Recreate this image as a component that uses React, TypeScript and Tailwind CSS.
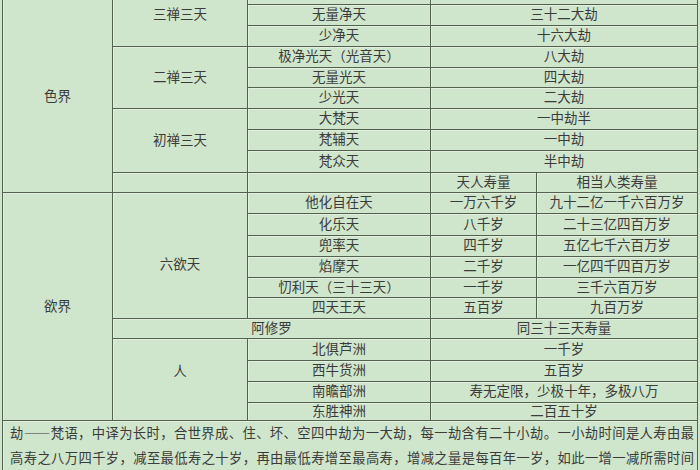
import type { ReactNode } from "react";

const cellBase =
  "flex items-center justify-center whitespace-nowrap border-r border-b border-[#53624f] shadow-[inset_1px_1px_0_#e2efde] leading-none";

function Cell({ className = "", children }: { className?: string; children?: ReactNode }) {
  return <div className={`${cellBase} ${className}`}>{children}</div>;
}

function FooterNote() {
  return (
    <div className="col-span-5 border-r border-[#53624f] pl-[7px] pr-[3px] shadow-[inset_1px_1px_0_#e2efde]">
      <div className="-mt-[1px] text-[13.3px] leading-[25px]">
        <div className="whitespace-nowrap text-justify [text-align-last:justify]">
          劫<span className="font-['Noto_Sans_CJK_SC',sans-serif] [font-feature-settings:'fwid']">——</span>梵语，中译为长时，合世界成、住、坏、空四中劫为一大劫，每一劫含有二十小劫。一小劫时间是人寿由最
        </div>
        <div className="whitespace-nowrap text-justify [text-align-last:justify]">
          高寿之八万四千岁，减至最低寿之十岁，再由最低寿增至最高寿，增减之量是每百年一岁，如此一增一减所需时间
        </div>
        <div className="whitespace-nowrap">为一小劫。</div>
      </div>
    </div>
  );
}

export default function App() {
  return (
    <div className="h-[470px] w-[700px] overflow-hidden bg-[#d0e6cc] font-['Liberation_Serif','Noto_Sans_CJK_SC',serif] text-[13.5px] text-[#3b3b3b]">
      <div className="ml-[2px] -mt-[17px] grid w-[696px] grid-cols-[110px_135px_183px_106px_161px] grid-rows-[21px_21px_21px_21px_20px_21px_21px_21px_22px_20px_21px_22px_21px_21px_20px_21px_20px_22px_21px_21px_18px_90px] border-l border-t border-[#53624f]">
        {/* 色界 — the first row sits above the visible area */}
        <Cell className="row-span-10 pt-[17px]">色界</Cell>
        <Cell className="row-span-3">三禅三天</Cell>
        <Cell />
        <Cell className="col-span-2" />
        <Cell>无量净天</Cell>
        <Cell className="col-span-2">三十二大劫</Cell>
        <Cell>少净天</Cell>
        <Cell className="col-span-2">十六大劫</Cell>

        <Cell className="row-span-3">二禅三天</Cell>
        <Cell>极净光天（光音天）</Cell>
        <Cell className="col-span-2">八大劫</Cell>
        <Cell>无量光天</Cell>
        <Cell className="col-span-2">四大劫</Cell>
        <Cell>少光天</Cell>
        <Cell className="col-span-2">二大劫</Cell>

        <Cell className="row-span-3">初禅三天</Cell>
        <Cell>大梵天</Cell>
        <Cell className="col-span-2">一中劫半</Cell>
        <Cell>梵辅天</Cell>
        <Cell className="col-span-2">一中劫</Cell>
        <Cell>梵众天</Cell>
        <Cell className="col-span-2">半中劫</Cell>

        <Cell />
        <Cell />
        <Cell>天人寿量</Cell>
        <Cell>相当人类寿量</Cell>

        {/* 欲界 */}
        <Cell className="row-span-11">欲界</Cell>
        <Cell className="row-span-6 pt-[18px]">六欲天</Cell>
        <Cell>他化自在天</Cell>
        <Cell>一万六千岁</Cell>
        <Cell>九十二亿一千六百万岁</Cell>
        <Cell>化乐天</Cell>
        <Cell>八千岁</Cell>
        <Cell>二十三亿四百万岁</Cell>
        <Cell>兜率天</Cell>
        <Cell>四千岁</Cell>
        <Cell>五亿七千六百万岁</Cell>
        <Cell>焰摩天</Cell>
        <Cell>二千岁</Cell>
        <Cell>一亿四千四百万岁</Cell>
        <Cell>忉利天（三十三天）</Cell>
        <Cell>一千岁</Cell>
        <Cell>三千六百万岁</Cell>
        <Cell>四天王天</Cell>
        <Cell>五百岁</Cell>
        <Cell>九百万岁</Cell>

        <Cell className="col-span-2">阿修罗</Cell>
        <Cell className="col-span-2">同三十三天寿量</Cell>

        <Cell className="row-span-4 pb-[16px]">人</Cell>
        <Cell>北俱芦洲</Cell>
        <Cell className="col-span-2">一千岁</Cell>
        <Cell>西牛货洲</Cell>
        <Cell className="col-span-2">五百岁</Cell>
        <Cell>南瞻部洲</Cell>
        <Cell className="col-span-2">寿无定限，少极十年，多极八万</Cell>
        <Cell>东胜神洲</Cell>
        <Cell className="col-span-2">二百五十岁</Cell>

        <FooterNote />
      </div>
    </div>
  );
}
